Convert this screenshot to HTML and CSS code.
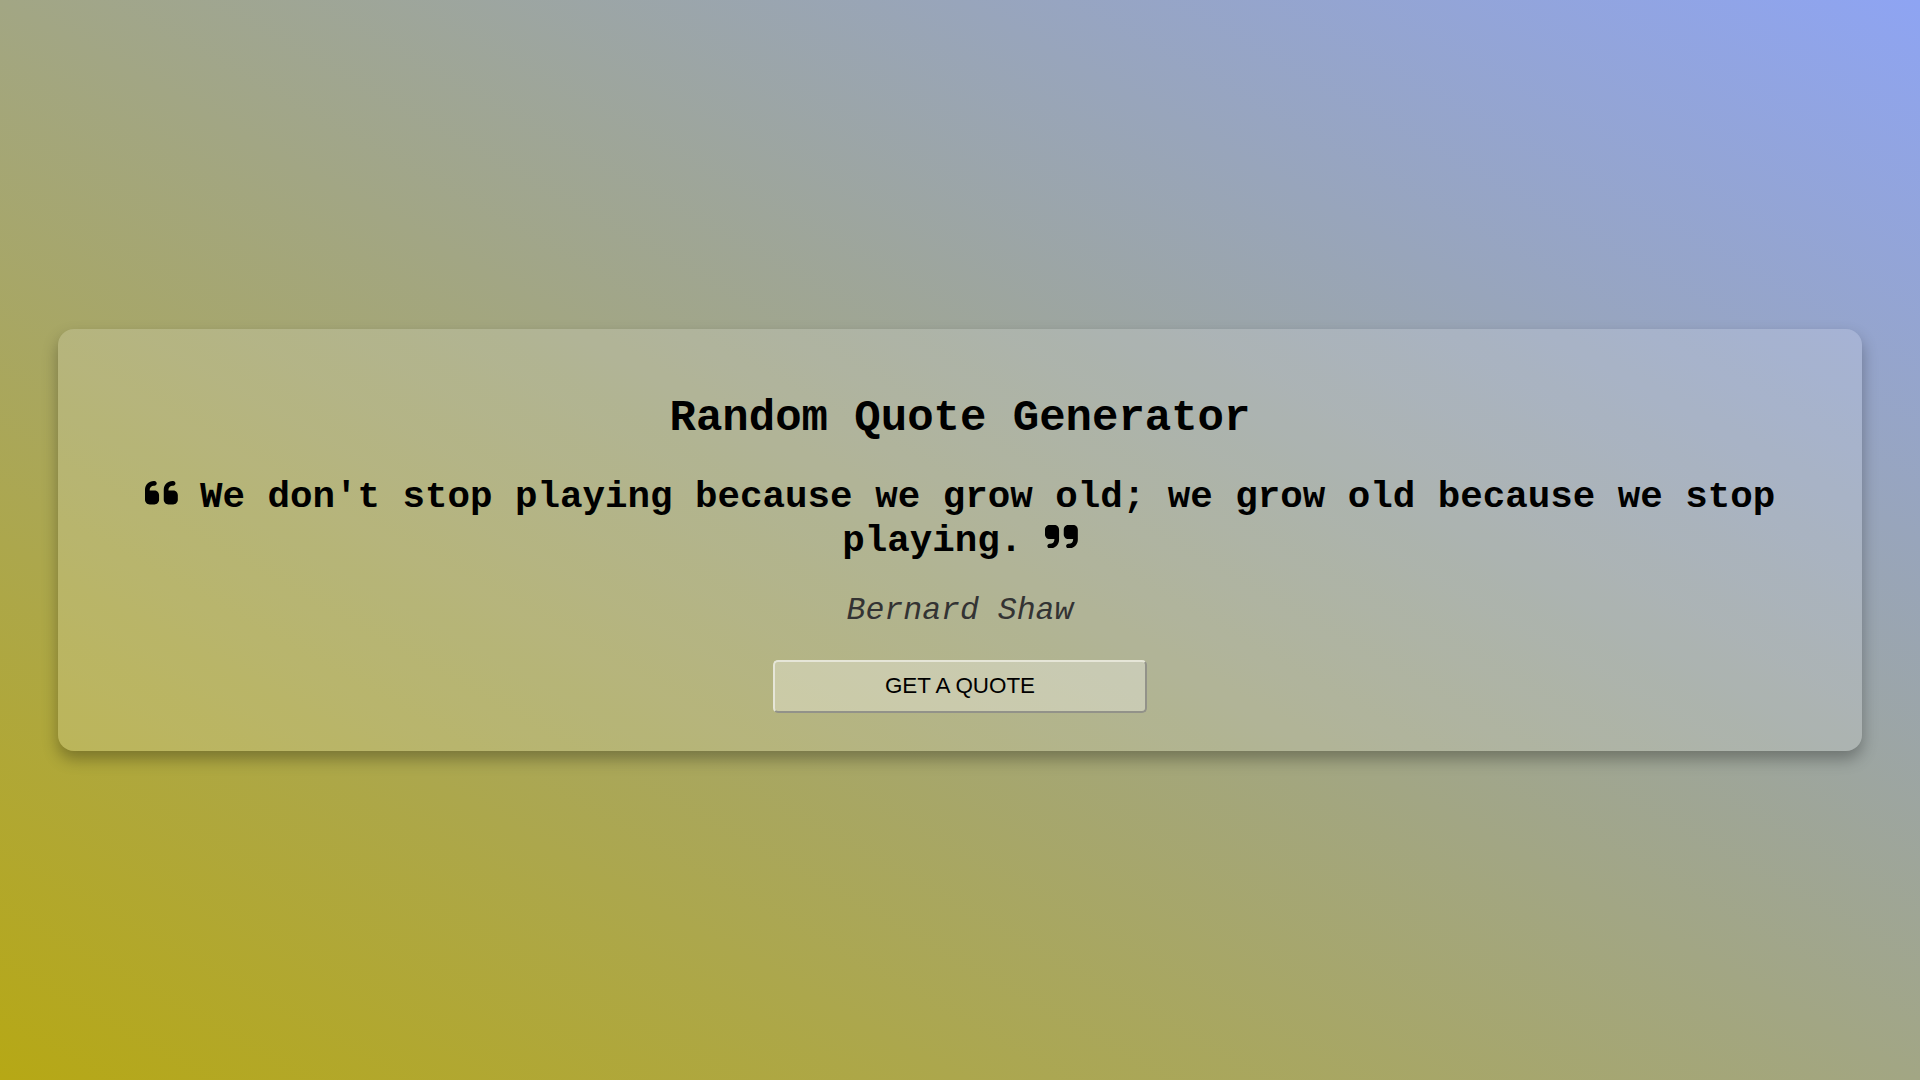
FILE: index.html
```html
<!DOCTYPE html>
<html lang="en">
<head>
<meta charset="utf-8">
<title>Random Quote Generator</title>
<link rel="stylesheet" href="styles.css">
</head>
<body>
  <main class="card">
    <h1 class="title">Random Quote Generator</h1>
    <p class="quote"><svg class="qicon" viewBox="0 96 448 320" aria-hidden="true"><path d="M0 216C0 149.7 53.7 96 120 96h8c17.7 0 32 14.3 32 32s-14.3 32-32 32h-8c-30.9 0-56 25.1-56 56v8h64c35.3 0 64 28.7 64 64v64c0 35.3-28.7 64-64 64H64c-35.3 0-64-28.7-64-64V320 288 216zm256 0c0-66.3 53.7-120 120-120h8c17.7 0 32 14.300 32 32s-14.3 32-32 32h-8c-30.9 0-56 25.1-56 56v8h64c35.3 0 64 28.7 64 64v64c0 35.3-28.7 64-64 64H320c-35.3 0-64-28.7-64-64V320 288 216z"/></svg> We don't stop playing because we grow old; we grow old because we stop playing. <svg class="qicon" viewBox="0 96 448 320" aria-hidden="true"><path d="M448 296c0 66.3-53.7 120-120 120h-8c-17.7 0-32-14.3-32-32s14.3-32 32-32h8c30.9 0 56-25.1 56-56v-8H320c-35.3 0-64-28.7-64-64V160c0-35.3 28.7-64 64-64h64c35.3 0 64 28.7 64 64v32 32 72zm-256 0c0 66.3-53.7 120-120 120h-8c-17.7 0-32-14.3-32-32s14.3-32 32-32h8c30.9 0 56-25.1 56-56v-8H64c-35.3 0-64-28.7-64-64V160c0-35.3 28.7-64 64-64h64c35.3 0 64 28.7 64 64v32 32 72z"/></svg></p>
    <p class="author">Bernard Shaw</p>
    <button class="btn" type="button">GET A QUOTE</button>
  </main>
</body>
</html>
```

FILE: styles.css
```css
html, body {
  margin: 0;
  padding: 0;
}

body {
  min-height: 100vh;
  display: flex;
  align-items: center;
  justify-content: center;
  background: linear-gradient(to top right, #b6a815 0%, #8ea4f3 100%);
  font-family: "Courier New", "Liberation Mono", monospace;
  color: #000;
}

.card {
  width: 94%;
  box-sizing: border-box;
  padding: 64px 40px 38px;
  border-radius: 16px;
  background: rgba(255, 255, 255, 0.16);
  box-shadow: 0 8px 16px rgba(0, 0, 0, 0.3);
  display: flex;
  flex-direction: column;
  align-items: center;
  text-align: center;
}

.title {
  margin: 0 0 33px;
  font-size: 44px;
  font-weight: bold;
  line-height: 50px;
}

.quote {
  margin: 0 0 30px;
  font-size: 37.5px;
  font-weight: bold;
  line-height: 43.4px;
}

.qicon {
  width: 0.875em;
  height: 0.625em;
  vertical-align: 0.0625em;
  fill: #000;
}

.author {
  margin: 0 0 31.5px;
  font-size: 31.5px;
  font-style: italic;
  color: #333;
  line-height: 35.5px;
}

.btn {
  width: 374px;
  height: 53px;
  padding: 0;
  font-family: "Liberation Sans", Arial, sans-serif;
  font-size: 22.4px;
  color: #000;
  background: rgba(255, 255, 255, 0.3);
  border: 2px outset #e6e6d8;
  border-radius: 5px;
  cursor: pointer;
}
```
